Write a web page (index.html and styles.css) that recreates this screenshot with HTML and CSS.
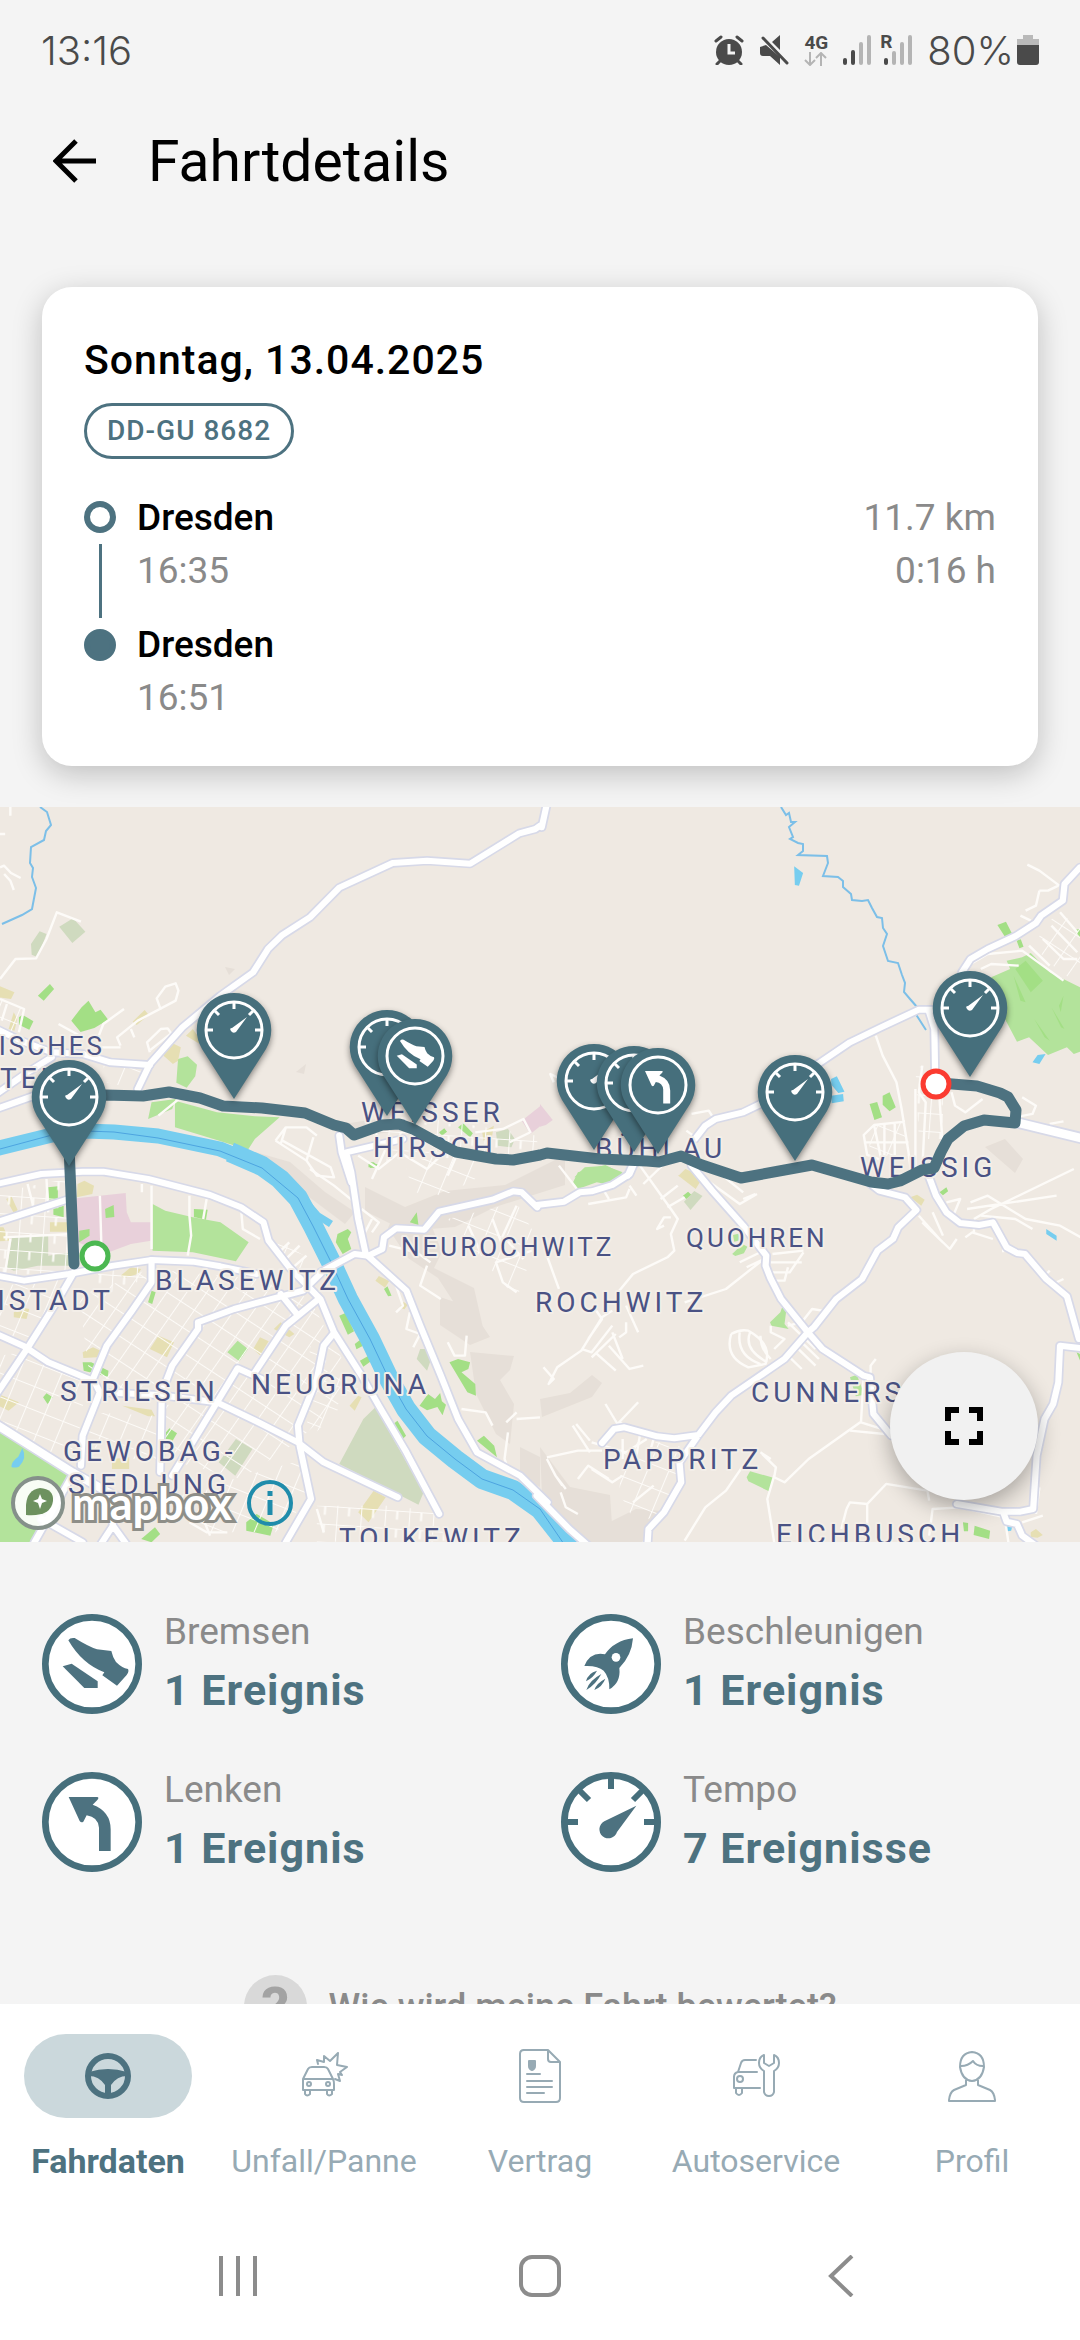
FILE: index.html
```html
<!DOCTYPE html>
<html lang="de">
<head>
    <meta charset="UTF-8">
    <meta name="viewport" content="width=device-width, initial-scale=1.0">
    <title>Fahrtdetails</title>
    <link rel="stylesheet" href="styles.css">
</head>
<body>
    <div class="status-bar">
        <span class="clock">13:16</span>
        <div class="status-icons">
            <svg width="30" height="30" viewBox="0 0 30 30">
                <circle cx="15" cy="17" r="13" fill="#4a4a4a"/>
                <path d="M2 6l5-4M28 6l-5-4M6 26l-3 3M24 26l3 3" stroke="#4a4a4a" stroke-width="3" stroke-linecap="round"/>
                <path d="M15 9v9h6" fill="none" stroke="#f4f4f4" stroke-width="3"/>
            </svg>
            <svg class="muted" width="30" height="30" viewBox="0 0 30 30">
                <path d="M1 12l6-2 14 12v8l-10-9H4q-3 0-3-3zM13 7l8-7v15z" fill="#4a4a4a"/>
                <path d="M4 3l24 25" stroke="#4a4a4a" stroke-width="3" stroke-linecap="round"/>
            </svg>
            <div class="network">
                <b>4G</b>
                <svg width="24" height="14" viewBox="0 0 24 14"><path d="M6 0v12M1 8l5 5 5-5M17 14V2M12 6l5-5 5 5" fill="none" stroke="#b4b4b4" stroke-width="2"/></svg>
            </div>
            <svg width="28" height="30" viewBox="0 0 28 30" stroke-width="4" stroke-linecap="round">
                <path d="M2 25v3M10 17v11" stroke="#4a4a4a"/><path d="M18 9v19M26 2v26" stroke="#b4b4b4"/>
            </svg>
            <div class="roaming">
                <b>R</b>
                <svg width="32" height="30" viewBox="0 0 32 30" stroke-width="4" stroke-linecap="round">
                    <path d="M6 25v3" stroke="#4a4a4a"/><path d="M14 18v10M22 9v19M30 2v26" stroke="#b4b4b4"/>
                </svg>
            </div>
            <span class="battery-level">80%</span>
            <svg width="22" height="30" viewBox="0 0 22 30">
                <path d="M6 0h10v4h6v7H0V4h6z" fill="#b9b9b9"/><path d="M0 10h22v17q0 3-3 3H3q-3 0-3-3z" fill="#4a4a4a"/>
            </svg>
        </div>
    </div>

    <header class="page-header">
        <button type="button" class="back-button" aria-label="Zurück">
            <svg width="44" height="44" viewBox="0 0 44 44"><path d="M43 22H4M23 2L3 22l20 20" fill="none" stroke="#000" stroke-width="5"/></svg>
        </button>
        <h1>Fahrtdetails</h1>
    </header>

    <main>
        <section class="trip-card">
            <h2>Sonntag, 13.04.2025</h2>
            <span class="plate">DD-GU 8682</span>
            <div class="trip">
                <div class="timeline">
                    <span class="dot"></span>
                    <span class="line"></span>
                    <span class="dot filled"></span>
                </div>
                <div class="stops">
                    <div class="stop"><strong>Dresden</strong><span>16:35</span></div>
                    <div class="stop"><strong>Dresden</strong><span>16:51</span></div>
                </div>
                <div class="totals"><span>11.7 km</span><span>0:16 h</span></div>
            </div>
        </section>

        <section class="map">
            <svg class="map-canvas" viewBox="0 0 1080 735" preserveAspectRatio="xMidYMid slice">
                <defs>
                    <pattern id="gridA" width="62" height="48" patternUnits="userSpaceOnUse" patternTransform="rotate(-56)"><path d="M0 0H62M0 0V48"/></pattern>
                    <pattern id="gridB" width="70" height="54" patternUnits="userSpaceOnUse" patternTransform="rotate(4)"><path d="M0 0H70M0 0V54M35 0V27"/></pattern>
                    <pattern id="gridC" width="58" height="66" patternUnits="userSpaceOnUse" patternTransform="rotate(22)"><path d="M0 0H58M0 0V66"/></pattern>

                    <!-- main roads, one group per map tile -->
                    <g id="roads">
                        <g transform="translate(0 -8) scale(.3444 .3333)">
                            <path d="M1568 80L1555 90 1508 103 1365 194 1240 185 1140 192 985 266 900 355 820 408 778 450 735 520 640 590 530 685 435 795 400 870"/>
                            <path d="M-10 690L60 725 150 760 240 765 320 790 435 798M-10 885L80 820 150 775M-10 930L100 890"/>
                            <path d="M985 1010L992 1060 1020 1150"/>
                        </g>
                        <g transform="translate(540 -8) scale(.3444 .3333)">
                            <path d="M18 24L5 85M640 915L590 940 510 960 480 980 450 1020M800 800L900 730 990 685 1100 632 1140 632M1130 640L1145 690 1147 810M1225 520L1250 480 1300 450 1380 412 1440 372 1455 350 1518 305 1523 255 1568 205"/>
                            <path d="M1390 972L1590 1022" stroke-width="1.5em"/>
                            <path d="M270 1095L255 1130"/>
                        </g>
                        <g transform="translate(0 352) scale(.3444 .3333)">
                            <path d="M-10 75L120 45 240 38 300 38 430 60 610 108 700 145 765 190 780 245 840 325 930 420 970 520 1050 650 1100 740 1180 880 1275 1065"/>
                            <path d="M-10 190L195 122M-10 350L70 365 200 345 330 320 440 303 560 308 640 322 745 345"/>
                            <path d="M215 340L170 420 75 575-10 705M440 303V370L380 460 310 560 270 660 290 700 240 830 235 920M-10 525L70 562 140 610 270 665"/>
                            <path d="M1170 -60L1005 -20 1020 40 1040 180 1062 285 1180 395 1220 500 1280 650 1330 780 1385 880 1510 950 1590 1030"/>
                            <path d="M930 340L1030 285 1070 290 1110 270 1115 235 1150 208 1232 212 1275 158 1430 122 1490 97 1515 100 1560 145"/>
                            <path d="M575 490L680 450 880 395 930 345M575 490V510L500 620 470 700 465 940M815 405L862 465M925 420L830 500 740 640M970 522L940 560 920 660 865 800 870 860 903 1020 830 1150M630 730L690 628 760 660M300 700L460 708 630 730 750 790 865 850 940 910 1155 1015M630 730L500 950M320 1040L328 1100 370 1160M328 1100L290 1160"/>
                            <path d="M-20 790L210 940 340 1015" stroke-width="1.4em"/>
                            <path d="M215 940L100 1150M120 1080L240 1150"/>
                        </g>
                        <g transform="translate(540 352) scale(.3444 .3333)">
                            <path d="M-10 138L70 128 115 100 150 97 210 78 260 45 275 10M440 20L500 95 590 200 657 290 655 320 668 355 700 420 778 520 820 570 940 650 958 655 968 765 1020 830"/>
                            <path d="M960 75L985 95 1060 115 1093 153 1040 205 1025 240 980 275 935 360 860 420 795 505 778 520 710 600 555 710 510 760 460 828 405 910 410 970 360 1060 315 1110 312 1160M180 852L215 810 245 805 340 832 390 838 460 828"/>
                            <path d="M1130 55L1150 110 1180 160 1220 192 1275 198 1315 190 1355 265 1385 282 1408 285 1470 360 1530 412 1565 540M1575 568L1510 560 1505 670 1490 735 1465 780 1442 890 1432 1050 1395 1058 1340 1058 1210 1035M1345 1060L1355 1088 1385 1095 1400 1130 1440 1160"/>
                            <path d="M-10 1010L85 1110 140 1160"/>
                        </g>
                    </g>

                    <path id="pinShape" d="M0 -37A37 37 0 0 1 32 19L0 69-32 19A37 37 0 0 1 0 -37Z"/>
                    <g id="brakeGlyph">
                        <path d="M79 79Q84 70 98 72 140 98 165 106L208 111Q212 130 222 144 240 162 258 165 262 172 254 183L225 215 181 184 187 175Q120 150 79 79Z"/>
                        <path d="M62 157L89 149 167 202V222H127Z"/>
                    </g>
                    <path id="turnGlyph" d="M80 75H165Q173 76 166 84L152 98Q206 118 206 172V237H171V167Q168 135 134 130L124 149Q118 154 113 147Z"/>
                    <g id="pinGauge">
                        <use href="#pinShape" class="pin-body"/>
                        <circle r="28" class="pin-ring"/>
                        <path class="pin-ring" d="M0-28v7M-28 0h7M28 0h-7M-19-19l4 4M19-19l-4 4"/>
                        <path class="pin-glyph" d="M13-13L2 2Q-1 4-3 1T-2-2Z"/>
                    </g>
                    <g id="pinBrake">
                        <use href="#pinShape" class="pin-body"/>
                        <circle r="28" class="pin-ring"/>
                        <use href="#brakeGlyph" class="pin-glyph" transform="translate(-30 -30) scale(.19)"/>
                    </g>
                    <g id="pinTurn">
                        <use href="#pinShape" class="pin-body"/>
                        <circle r="28" class="pin-ring"/>
                        <use href="#turnGlyph" class="pin-glyph" transform="translate(-29 -29) scale(.2)"/>
                    </g>
                </defs>

                <rect width="1080" height="735" fill="#efe9e2"/>

                <!-- hills -->
                <g fill="#e6dfd8">
                    <path d="M320 310l30 6 40-6 10 14-50 6zM255 345l35 10 35 30 30 20-10 12-40-30-40-25zM365 380l40 20 40-16 60-6 40-20 20-10v30l-70 22-40 20-50 4-40-20zM395 405l35 10 12 30-8 16 40 20 10 44-20-14-26-40-30-20-20-30zM470 545l44 4-4 14-10 10 14 24-4 40-14-10-20-40zM440 490l30 10 20 30-20 8-30-20zM540 592l30-6 22-18 10 8-10 14-50 20zM540 640l30 40 40 8 2 30-30 10-40-40zM520 640l20 10v30l-20-10zM70 808l10 6-6 10zM225 160l10 2-6 6zM296 265l10-8-2 10zM985 340l20-8 18 20-8 14z"/>
                    <path d="M560 700l40 20 36-18 26 2-20 31h-70z"/>
                </g>

                <!-- parks and built areas -->
                <g transform="translate(0 -8) scale(.3444 .3333)">
                    <path fill="#cfdabf" d="M172 383l40-25 36 40-38 34zM90 435l25-38 20 8-25 70-18-8zM1440 1000l35-10 20 30-10 25-40-5z"/>
                    <path fill="#b3e39b" d="M517 780l28-8 27 25-5 35-25 34-30-15zM508 905L630 940 740 952 812 955 740 1020 720 1052 620 1020 508 985ZM440 910l70-10-10 30-70 30z"/>
                    <path fill="#a3df85" d="M110 590l35-35 12 15-30 35zM207 665l30-40 20-20 20 35 15-8 22 30-40 25-40 12zM55 655l10-8 32 20-12 25-30-15zM1330 985l15-12 28 30-8 12zM1070 1095l30 0-5 12-25-2zM1275 1000l15-12 8 10-15 12z"/>
                    <path fill="#e6dfb3" d="M-5 560l47 20-10 20-37-5zM25 690l15-50 10 20-8 35zM385 668l35-35 12 15-35 30zM475 770l20-40 30 15-8 40-15 10zM540 710l20-20 14 20 6 25zM1400 1000l34-20-5 30-25 15z"/>
                    <path fill="#e8d0da" d="M1515 965l55-45v60l-30 25z"/>
                </g>
                <g transform="translate(540 -8) scale(.3444 .3333)">
                    <path fill="#b3e39b" d="M1310 535L1365 510 1355 485 1400 475 1425 462 1480 520 1568 565 1590 750 1550 765 1530 745 1475 768 1420 715 1385 728 1350 660ZM100 1135l30-30 60-5 50 20-30 20z"/>
                    <path fill="#a3df85" d="M1380 510l30-25 50 60-35 35zM1375 530l35 80-15-5zM1435 660l45 65-15-10zM1485 625l38 65-10-5zM1520 590l-8 50-5-20zM1328 378l25-10 17 35-20 10zM1384 425l12-4 8 22-12 5zM995 890l20-10 18 45-18 12-20-20zM957 915l22-6 14 46-22 8zM1552 392l16-2v25z"/>
                    <path fill="#e8d0da" d="M0 915l37 48-20 15-17 5z"/>
                    <path fill="#e6dfb3" d="M400 1130l60-15-30 25z"/>
                    <path fill="#76cdef" d="M738 202l26 20-12 38-12-2zM845 840l17-8 22 46-18 4-20-25zM845 890l35-5 2 22-35 6zM1430 790l15-22 23-3-18 30z"/>
                </g>
                <g transform="translate(0 352) scale(.3444 .3333)">
                    <path fill="#cfdabf" d="M35 235l105-5v60l70-10v40l-100 0-70 15-20-10zM985 915L1055 780 1090 745 1230 1000 1215 1037ZM635 910l50-70 48 30-50 80zM1210 600l10-30 20 0 15 20-15 45z"/>
                    <path fill="#e8d0da" d="M222 118L365 102 368 160 380 190 438 190V245L380 255 310 282 225 250Z"/>
                    <path fill="#b3e39b" d="M443 135L480 155 560 175 640 190 722 250 685 307 560 280 443 275ZM-5 815L80 865 200 940 100 1150H-5ZM660 580l30-35 30 25-25 37z"/>
                    <path fill="#a3df85" d="M140 85l28-3v38l-25 3zM155 150l30-10v35l-30-8zM305 150l25-12 2 36-25 3zM230 215l30-5v20l-30 20zM563 150l40 2-5 30-35-8zM1190 190l20-30 5 38zM980 225l30-15 10 10-10 20 10 30-25 15-20-35zM985 470l18-8 25 55-18 10zM1030 555l15-12 8 18-18 10zM1045 605l25-15 5 18-20 15zM1305 610l25-10 35 10-5 20-20 10 40 35 2 35-25-10zM1218 740l25-35 20 15 15-18 5 25 12 10-10 32-15-25-30 10zM1142 795l12-10 25 45-10 10zM1385 845l20-15 30 30 8 35zM240 610l25 0 50 25-2 18-70-18zM125 715l10-12 18 12-15 20zM482 820l10-12 22 15-20 35-15-10zM430 430l10-35 12 5-10 35zM715 1090l30-25 50 30-10 35-70-15zM410 1140l40-35 15 20-25 25zM1070 10l15 0 15 12-25 5zM1115 390l10-8 12 28-10 2z"/>
                    <path fill="#e6dfb3" d="M225 75l20-10 28 15-5 25-45 10zM18 120l15-8 18 40-10 12zM145 190h50v28h-50zM-5 205l15 0 18 40-30 2zM435 570l25-40 45 20-20 45zM735 570l20-35 25 12-25 42zM795 510l20-20 40 35-15 10zM355 740l85 12 10 20-20 0zM-5 705l60 25-30 25-30-15zM325 900l50-5v35h-50zM1040 1060l45-65 35 20-50 75zM350 350l30-25 30 5-10 15-40 12zM240 580l30-15 22 10-10 20-40 2zM40 460l20-15 25 5-8 30-37-5zM1160 445l12-16 12 8-10 14zM1015 740l25-30 10 5-20 40zM1090 365l10-14 30 15-12 20z"/>
                    <path fill="#76cdef" d="M65 868q15 30-10 55-15 5-22 0 0-15 20-30z"/>
                </g>
                <g transform="translate(540 352) scale(.3444 .3333)">
                    <path fill="#b3e39b" d="M96 70L110 40 190 18 240 45 190 75 165 70 110 90ZM600 955l10-18 70 20-15 40-60-30zM668 490l30-30 5-15 12 10-5 40 12 15-50-10zM558 285l30-30 14 8-10 20-25 8zM560 228l22-5 2 20-20 5zM900 655l20-8 22 60-25 5z"/>
                    <path fill="#a3df85" d="M415 110l15-12 10 10-15 12zM1160 100l20-15 5 12-15 12zM1262 1100l45 15-3 25-45-12zM1228 1090l15 2v25l-12 0zM1558 580l10 5v20z"/>
                    <path fill="#cfdabf" d="M418 128l30-32 24 15-35 42z"/>
                    <path fill="#e6dfb3" d="M402 50l20-20 35 15 10 20-15 25zM1075 115l20-8 22 15-10 18zM1425 1120l15-10 20 18-15 8-20-2z"/>
                    <path fill="#76cdef" d="M1470 210l30 20v15l-30-20zM1355 1100l18-5-5 20-12 2z"/>
                </g>

                <!-- city street blocks -->
                <g class="blocks" transform="translate(0 352) scale(.3444 .3333)">
                    <path fill="url(#gridA)" d="M230 420L430 330 760 360 900 420 960 540 1040 680 860 850 700 960 480 900 470 740 620 720 450 700 300 690 260 650Z"/>
                    <path fill="url(#gridC)" d="M0 380L200 360 160 440 60 560 0 540ZM0 590L60 580 250 670 230 820 190 920 0 780ZM250 760L460 770 460 900 250 900ZM500 1010L890 900 900 1020 800 1120 600 1120Z"/>
                    <path fill="url(#gridB)" d="M0 100L190 60 200 340 0 350ZM300 310L440 310 420 360 250 430ZM920 1040L1150 1040 1260 1060 1300 1148H920Z"/>
                    <path fill="url(#gridC)" d="M800 240L900 300 930 340 860 400ZM900 560L1040 690 890 850ZM1180 30L1240-20 1420-40 1380 60 1290 110 1200 100ZM1300 180L1500 130 1560 240 1500 420 1400 300Z"/>
                    <path fill="url(#gridB)" d="M1100 10L1080-110 1200-130 1560-70 1560 0 1400-10 1250 0Z"/>
                    <path fill="url(#gridC)" d="M0-480L70-450 40-380 0-390ZM300-280L440-270 390-210 310-230Z"/>
                </g>
                <g class="blocks" transform="translate(540 352) scale(.3444 .3333)">
                    <path fill="url(#gridC)" d="M240 850L380 850 440 880 400 960 350 1060 280 1100 230 1000ZM950-100L1060-110 1070-10 960-10Z"/>
                    <path fill="url(#gridB)" d="M1090-280L1170-270 1170-60 1100-60Z"/>
                    <path fill="url(#gridA)" d="M1430-640L1500-740 1570-700 1570-520 1500-570Z"/>
                </g>

                <!-- side streets -->
                <g class="streets" transform="translate(0 -8) scale(.3444 .3333)">
                    <path d="M0 540L45 480 105 478 135 420 165 340 235 368M0 105L15 105M30 24V50M0 205l12-5 20 22 28 15M12 225l18 20 10 28M170 675l70 40M290 745l60 0M360 630l-60 45-15 40M350 740l-10-25 60-50 110-60 8-30-8-22-30 10-25 35 12 35M435 760l-8-30 40-40 20-2 10 15-60 50M380 690l10 25M0 600l70 30-15 70M20 615l-15 50"/>
                    <path d="M800 1025l30-40 60 0 30 25M800 1025l90 60 30 45 50 5-10-30-140-80M830 985l-15 50M890 1085l20-70M520 900l-60 50M1040 1070l60 40 60-50 80 50 40-40M1080 1140l40-90M1300 1130l30-70M1380 1000l80-10 60-30 20 40-60 30"/>
                </g>
                <g class="streets" transform="translate(540 -8) scale(.3444 .3333)">
                    <path d="M1415 197l35 18 58 45M1450 275h25l30-15M1450 275l-10 45-30 15M1395 350l30 15M975 710l20 60 40 80 15 80 20 130 10 80M1060 968l-90 10-30 30 10 60 40 15M970 978l20 100M1000 975v100M1030 970v110M940 1030h130M1090 870l0 250M1110 800l-10 80 20 30-10 200M1160 900l15 220M1195 880l10 40 30 20 50-40M1400 895l40 25-10 25-50 10M1480 975l40-8M1280 510l30-15 80 5M1420 440l60 60M1460 420l60 60 40 0M1485 380l75 80M1510 340l50 60M40 850l-10-25 20 10M440 945l50-10 15 25M425 995l40 30M1250 495l50-30 100-10 80 60 40 30"/>
                </g>
                <g class="streets" transform="translate(0 352) scale(.3444 .3333)">
                    <path d="M135 60l5 100M80 75l20 80M290 110l5 170M440 80v190M412 75l0 25M550 110l0 60 5 60-10 60M10 235l200-10M30 240l-15 100M600 120l-10 60M700 150l5 60 50 30M840 250l-40 40M870 260l-50 50M890 290l-50 45"/>
                    <path d="M900 30l70 50 60 50M1080 180l-30 60M1050 150l50 40-20 30M1130 260l80 20 40 30M1240 320l-20 60 60 40M1100 320l50 60 20 60-20 20M1190 460l-10 50 40 15-20 40M1300 550l20 40 30 0 5-60M1500 400l-40-30-20-60 60-20 60-20M1360 200l40 90M1430 180l40 110M1500 140l-40 90 60 70M1470 790l30-30M1475 820l-10 80 10 30M1500 780l68-5M1340 750l70 10 20 40M920 1050l20 70M550 1090l50 30h60M590 1080l20 50"/>
                </g>
                <g class="streets" transform="translate(540 352) scale(.3444 .3333)">
                    <path d="M20 290l35 100M55 20l60 80M290 20l90 130 20 30-20 45 10 50-20 20-100 50-40 50-5 30M360 200l-20 10 20-35 20 0M300 75l60-60M350 120l50-40M370 145l50-30M480 60l100 75 50-30M530 50l60 50M590 120l35-15M140 135l110-20 10-25M200 120l-20-35M260 80l20 30M650 300l-110 90-120 40M580 310l60-30M600 325l50-25M670 310h90M665 340l60 0 40-60M720 325l-10 40h-25M765 275l-90 10"/>
                    <path d="M10 625l30 35-15 15 25-50 70-50 60-100 30-20M120 570l30 10 60-80M150 595l70-70M200 560l60 70 40-10M160 580l60 55M210 520l30 80M250 440l35 80M250 490l0 30-20 15M160 450l20 30-40 60M190 735l35 60 60-65M230 790l50 30M20 895l90-20h70M95 800l50 80M105 795l40 50M20 900l25 50 30 40M45 950l20 30M60 1000l15 45 35 20M110 960l30-40 60 40M150 930l60 40 30-20"/>
                    <path d="M555 525q-20 70 50 100l50-10q20-60-50-100-25-5-50 10M580 520q-10 70 60 95M610 520q-20 50 50 90M640 530q0 40 30 70M670 500v20l40 20-30 30M720 490l80 80M710 580l50 50M740 560l60 60M760 550l50 50M720 500l40-10 30-40 30 5"/>
                    <path d="M975 600l-15 20v30M940 650l-8 140 60 20 10 15M900 815l100 10M930 790l-150 110-70 70-30-15 5-30-40-40M680 950l-20 70 20 130M420 1145l60-100 60-50 60-90M890 1050l10-20 50 5 55-60 120 20 5 30M950 1035l0 70M890 1050l-15 60M1130 1130l10-80 80-5 130 30M1100 170l60 70 30 30 20-30M1110 190l60 60M1140 160l30 70M1180 130l40-10-20 50M1250 130l50-20 110 70 100 20 60 35M1240 150l260-40M1260 180l50-30 240-120M1280 170l100 10 50 30M1235 235l20-15 60 20M1260 205v20M1470 345l10-10M1500 370l20-10M1345 260v20M1450 985l-10 80M1350 1080l10 70M1400 1090l60-20M150 850l100 30 60-40M240 840l0 60M290 830l-10 60M330 840l-20 70M270 1030l60-50M640 880l30 20"/>
                </g>

                <!-- creeks -->
                <g class="creek">
                    <path d="M40 0L47 5 51 18 46 24 44 33 31 40 30 56 33 61 32 70 36 81 32 102 22 108 2 117"/>
                    <path d="M781 0L786 8 789 6 791 15 795 15 789 20 793 30 790 32 798 36 803 37 803 44 798 48 827 49 828 56 823 69 838 70 843 74 843 80 851 87 852 93 862 94 868 93 872 101 877 110 882 111 883 121 887 127 883 139 888 154 898 156 902 168 905 176 904 185 910 192 917 200 917 209 926 223"/>
                </g>

                <path class="river" stroke-width="15" d="M-5 342L52 328 85 324 114 325 158 329 220 342 262 359"/>
                <path class="river" stroke-width="20" d="M230 345L262 359 280 372 298 391 313 419 331 455 348 492 370 532 389 572 406 602 427 629 455 652 482 672 513 683 540 702 570 740"/>
                <path d="M308 392l12 14 13 8-4 6-14-9-8-14z" fill="#76cdef"/>
                <path class="river-line" d="M0 342L52 328 85 324 114 325 158 331 220 344 262 361 298 391 313 419 331 455 348 492 370 532 389 572 406 602 427 629 455 652 482 672 513 683 540 702 566 740"/>

                <use href="#roads" class="road-casing"/>
                <use href="#roads" class="road"/>

                <g class="place">
                    <text x="105" y="248" text-anchor="end" class="small">ISCHES</text>
                    <text x="0" y="281">TEI</text>
                    <text x="361" y="315">WEISSER</text>
                    <text x="373" y="350">HIRSCH</text>
                    <text x="595" y="351">BÜHLAU</text>
                    <text x="860" y="370">WEISSIG</text>
                    <text x="401" y="449" class="small">NEUROCHWITZ</text>
                    <text x="686" y="440" class="small">QUOHREN</text>
                    <text x="155" y="483">BLASEWITZ</text>
                    <text x="114" y="503" text-anchor="end">ISTADT</text>
                    <text x="535" y="505">ROCHWITZ</text>
                    <text x="60" y="594">STRIESEN</text>
                    <text x="251" y="587">NEUGRUNA</text>
                    <text x="751" y="595">CUNNERSD</text>
                    <text x="63" y="654">GEWOBAG-</text>
                    <text x="68" y="687">SIEDLUNG</text>
                    <text x="603" y="662">PAPPRITZ</text>
                    <text x="339" y="741">TOLKEWITZ</text>
                    <text x="776" y="737">EICHBUSCH</text>
                </g>

                <path class="route" d="M74 457L69 340M85 290L105 288 143 289 169 285 200 291 223 299 262 301 305 306 334 318 346 321 354 328 382 318 399 317 413 322 444 339 456 345 496 352 513 353 540 348 547 346 600 352 647 354 659 355 681 349 702 358 741 371 812 358 871 375 888 377 900 374 922 363 934 361 941 345 948 332 964 319 984 313 1015 316 1016 303 1008 290 1000 286 977 279 940 276"/>
                <circle cx="95" cy="449" r="13" fill="#fff" stroke="#4cb851" stroke-width="5"/>
                <circle cx="936" cy="277" r="13" fill="#fff" stroke="#fb3b30" stroke-width="5"/>

                <g class="pins">
                    <use href="#pinGauge" x="69" y="290"/>
                    <use href="#pinGauge" x="234" y="223"/>
                    <use href="#pinGauge" x="387" y="240"/>
                    <use href="#pinBrake" x="415" y="249"/>
                    <use href="#pinGauge" x="594" y="274"/>
                    <use href="#pinGauge" x="634" y="276"/>
                    <use href="#pinTurn" x="658" y="278"/>
                    <use href="#pinGauge" x="795" y="285"/>
                    <use href="#pinGauge" x="970" y="201"/>
                </g>
            </svg>

            <div class="map-credit">
                <svg width="56" height="56" viewBox="0 0 56 56">
                    <circle cx="28" cy="28" r="25" fill="#fff" fill-opacity=".9" stroke="#85908a" stroke-width="4"/>
                    <path d="M16 40V30Q17 15 30 13 44 14 43 26 41 42 16 40Z" fill="#6d915f"/>
                    <path d="M30 19l2 5 5 2-5 2-2 6-2-6-5-2 5-2z" fill="#fff"/>
                </svg>
                <span class="mapbox">mapbox</span>
                <button type="button" class="info-button" aria-label="Karteninformationen">
                    <svg width="48" height="48" viewBox="0 0 48 48"><circle cx="24" cy="24" r="21" fill="none" stroke="#1f8cab" stroke-width="4"/><path d="M24 21v15M24 12v5" stroke="#1f8cab" stroke-width="5"/></svg>
                </button>
            </div>
            <button type="button" class="fullscreen-button" aria-label="Vollbild">
                <svg width="38" height="38" viewBox="0 0 38 38"><path d="M3 14V3h11M24 3h11v11M35 24v11H24M14 35H3V24" fill="none" stroke="#000" stroke-width="6"/></svg>
            </button>
        </section>

        <section class="events">
            <div class="event">
                <svg viewBox="0 0 300 300"><circle cx="150" cy="150" r="140"/><use href="#brakeGlyph"/></svg>
                <div><span>Bremsen</span><strong>1 Ereignis</strong></div>
            </div>
            <div class="event">
                <svg viewBox="0 0 300 300">
                    <circle cx="150" cy="150" r="140"/>
                    <path d="M216 73Q212 125 175 162 180 206 145 226 146 190 128 170 110 154 70 156 88 112 132 121 160 80 216 73Z"/>
                    <circle class="hole" cx="165" cy="130" r="13"/>
                    <path d="M108 170Q82 176 75 202 98 190 108 170ZM121 180Q84 200 76 228 104 212 121 180ZM133 194Q106 208 100 228 124 218 133 194Z"/>
                </svg>
                <div><span>Beschleunigen</span><strong>1 Ereignis</strong></div>
            </div>
            <div class="event">
                <svg viewBox="0 0 300 300"><circle cx="150" cy="150" r="140"/><use href="#turnGlyph"/></svg>
                <div><span>Lenken</span><strong>1 Ereignis</strong></div>
            </div>
            <div class="event">
                <svg viewBox="0 0 300 300">
                    <circle cx="150" cy="150" r="140"/>
                    <path class="ticks" d="M150 15V51M15 150H51M285 150H249M54 54L84 84M246 54L216 84"/>
                    <path d="M226 101L168 180A27 27 0 1 1 130 148Z"/>
                </svg>
                <div><span>Tempo</span><strong>7 Ereignisse</strong></div>
            </div>
        </section>

        <a href="#bewertung" class="help-link">
            <span class="help-mark">?</span>
            Wie wird meine Fahrt bewertet?
        </a>
    </main>

    <nav class="tab-bar">
        <a href="#fahrdaten" class="tab active">
            <span class="tab-icon">
                <svg width="48" height="48" viewBox="0 0 48 48">
                    <circle cx="24" cy="24" r="20" class="wheel"/>
                    <path d="M5 20Q24 14 43 20V24Q33 24 27 33V43H21V33Q15 24 5 24Z" fill="#4d7280"/>
                </svg>
            </span>
            Fahrdaten
        </a>
        <a href="#unfall" class="tab">
            <span class="tab-icon">
                <svg width="48" height="48" viewBox="0 0 48 48">
                    <path d="M3 27L8 17Q9 15 12 15H24Q27 15 28 17L33 27M3 27H33Q34 29 34 32V38H3V29ZM5 38V42Q7 45 10 42V38M27 38V42Q29 45 32 42V38"/>
                    <circle cx="9" cy="32" r="2"/><circle cx="28" cy="32" r="2"/>
                    <path d="M18 12L17 8 24 10V4L30 9 38 1 37 13 47 15 40 20 42 23 38 22 40 29 35 27"/>
                </svg>
            </span>
            Unfall/Panne
        </a>
        <a href="#vertrag" class="tab">
            <span class="tab-icon">
                <svg width="44" height="56" viewBox="0 0 44 56">
                    <path d="M5 2H30L42 14V50Q42 54 38 54H6Q2 54 2 50V6Q2 2 6 2M30 2V11Q30 14 33 14H42M9 26H22M9 33H34M9 39H34M9 45H26"/>
                    <path d="M11 13h6v5q0 3-3 4-3-1-3-4z" fill="#97aab4"/>
                </svg>
            </span>
            Vertrag
        </a>
        <a href="#autoservice" class="tab">
            <span class="tab-icon">
                <svg width="48" height="48" viewBox="0 0 48 48">
                    <path d="M24 8H13Q10 8 9 11L6 20H25M6 20Q2 21 2 25V36H28M4 36V41Q7 45 10 41V36"/>
                    <circle cx="8" cy="27" r="3"/>
                    <path d="M32 3Q27 5 27 11 27 16 32 19V40Q33 44 37 44T42 40V19Q47 16 47 11 47 5 42 3V11L37 14 32 11Z"/>
                </svg>
            </span>
            Autoservice
        </a>
        <a href="#profil" class="tab">
            <span class="tab-icon">
                <svg width="48" height="52" viewBox="0 0 48 52">
                    <path d="M24 2Q36 3 36 17 34 30 24 31 14 30 12 17 12 3 24 2ZM13 16Q20 16 25 11 28 16 35 16M18 30V35L6 40Q2 42 1 50V51H47V50Q46 42 42 40L30 35V30"/>
                </svg>
            </span>
            Profil
        </a>
    </nav>

    <div class="system-nav">
        <button type="button" aria-label="Letzte Apps"><svg width="42" height="42" viewBox="0 0 42 42"><path d="M4 1V41M21 1V41M38 1V41"/></svg></button>
        <button type="button" aria-label="Startbildschirm"><svg width="42" height="42" viewBox="0 0 42 42"><rect x="2" y="2" width="38" height="38" rx="11"/></svg></button>
        <button type="button" aria-label="Zurück"><svg width="42" height="42" viewBox="0 0 42 42"><path d="M31 1L10 21 31 41"/></svg></button>
    </div>
</body>
</html>
```
FILE: styles.css
```css
* { box-sizing: border-box; }
body {
    margin: 0;
    height: 100vh;
    display: flex;
    flex-direction: column;
    background-color: #f4f4f4;
    color: #000;
    font-family: Roboto, "Liberation Sans", sans-serif;
    font-size: 37px;
}
h1, h2 { margin: 0; }
button { padding: 0; border: none; background: none; cursor: pointer; }
a { text-decoration: none; }
svg { display: block; flex: none; }

/* status bar */
.status-bar {
    display: flex;
    justify-content: space-between;
    align-items: center;
    height: 100px;
    padding: 0 41px;
    flex: none;
    font-family: Inter, Roboto, sans-serif;
    font-size: 40px;
    font-weight: 300;
    color: #4a4a4a;
}
.status-icons { display: flex; align-items: center; gap: 15px; }
.battery-level { margin-right: -12px; }
.network { display: flex; flex-direction: column; align-items: center; }
.network b, .roaming b { font: 700 19px/18px Roboto, sans-serif; }
.roaming { position: relative; margin-left: -6px; }
.roaming b { position: absolute; left: 0; top: -2px; }

/* header */
.page-header {
    display: flex;
    align-items: center;
    gap: 51px;
    height: 122px;
    padding: 0 53px;
    flex: none;
}
.page-header h1 { font-size: 57px; font-weight: 400; }

main { flex: 1; min-height: 0; overflow: hidden; padding-top: 65px; }

/* trip card */
.trip-card {
    margin: 0 42px 41px;
    padding: 42px;
    border-radius: 30px;
    background-color: #fff;
    box-shadow: 0 8px 30px rgba(0,0,0,0.22);
}
.trip-card h2 {
    font-size: 41px;
    line-height: 62px;
    font-weight: 500;
    letter-spacing: 1px;
}
.plate {
    display: inline-block;
    margin-top: 12px;
    padding: 0 20px;
    border: 3px solid #4d7280;
    border-radius: 28px;
    color: #4d7280;
    font-size: 28px;
    line-height: 50px;
    font-weight: 500;
    letter-spacing: 1px;
    vertical-align: top;
}
.trip { display: flex; gap: 21px; margin-top: 32px; line-height: 53px; }
.timeline { display: flex; flex-direction: column; align-items: center; padding: 10px 0 63px; }
.stops { display: flex; flex-direction: column; gap: 21px; flex: 1; }
.stop, .totals { display: flex; flex-direction: column; }
.stop strong { font-weight: 500; }
.stop span, .totals { color: #8a8a8a; }
.totals { text-align: right; }
.dot { width: 32px; height: 32px; border: 6px solid #4d7280; border-radius: 50%; }
.dot.filled { background-color: #4d7280; }
.line { flex: 1; width: 3px; margin: 11px 0; background-color: #4d7280; }

/* map */
.map { position: relative; aspect-ratio: 1080 / 735; overflow: hidden; }
.map-canvas { width: 100%; height: 100%; }
pattern path { stroke: #fdfbf8; stroke-width: 6; fill: none; }
.streets { fill: none; stroke: #fdfbf8; stroke-width: 7; stroke-linejoin: round; }
.road, .road-casing { fill: none; stroke-linejoin: round; stroke-linecap: round; }
.road { stroke: #fff; stroke-width: 18; font-size: 17px; }
.road-casing { stroke: #d7d9e8; stroke-width: 28; font-size: 24px; }
.creek { fill: none; stroke: #7cbfe8; stroke-width: 2; }
.river { fill: none; stroke: #76cdef; stroke-linejoin: round; }
.river-line { fill: none; stroke: #4da4e0; stroke-width: 1; }
.place {
    font-size: 28px;
    letter-spacing: 4px;
    fill: #4a5284;
    stroke: #f3eee8;
    stroke-width: 4px;
    stroke-linejoin: round;
    paint-order: stroke;
}
.place .small { font-size: 26px; letter-spacing: 3px; }
.route { fill: none; stroke: #4d7280; stroke-width: 11; stroke-linejoin: round; stroke-linecap: round; }
.pins use { filter: drop-shadow(0 3px 3px rgba(0,0,0,0.45)); }
.pin-body { fill: #466f7c; }
.pin-ring { fill: none; stroke: #fff; stroke-width: 3; }
.pin-glyph { fill: #fff; }
.map-credit {
    position: absolute;
    left: 10px;
    bottom: 11px;
    display: flex;
    align-items: center;
    gap: 6px;
}
.mapbox {
    width: 168px;
    color: #fff;
    font-family: Lato, sans-serif;
    font-size: 45px;
    line-height: 56px;
    font-weight: 700;
    -webkit-text-stroke: 6px #8e8e88;
    paint-order: stroke fill;
}
.fullscreen-button {
    position: absolute;
    right: 42px;
    bottom: 42px;
    width: 148px;
    height: 148px;
    display: flex;
    justify-content: center;
    align-items: center;
    border-radius: 50%;
    background-color: #f1f1f1;
    box-shadow: 0 8px 22px rgba(0,0,0,0.3);
}

/* events */
.events {
    display: grid;
    grid-template-columns: 1fr 1fr;
    gap: 50px 42px;
    padding: 68px 42px 0;
}
.event { display: flex; align-items: center; gap: 22px; height: 108px; }
.event svg { width: 100px; height: 100px; fill: #4d7280; }
.event circle { fill: #fff; stroke: #466f7c; stroke-width: 20; }
.event .hole { stroke: none; }
.event .ticks { stroke: #466f7c; stroke-width: 18; }
.event div { display: flex; flex-direction: column; line-height: 58px; padding-bottom: 6px; }
.event span { color: #8a8a8a; }
.event strong { color: #4d7280; font-size: 43px; letter-spacing: 1px; }

.help-link {
    display: flex;
    justify-content: center;
    align-items: center;
    gap: 22px;
    margin-top: 99px;
    color: #8a8a8a;
    font-size: 36px;
    font-weight: 500;
    white-space: nowrap;
}
.help-mark {
    width: 63px;
    height: 63px;
    border-radius: 50%;
    background-color: #d9d9d9;
    color: #a3a3a3;
    font-size: 56px;
    line-height: 67px;
    font-weight: 700;
    text-align: center;
}

/* bottom navigation */
.tab-bar {
    display: grid;
    grid-template-columns: repeat(5, 1fr);
    padding-top: 30px;
    flex: none;
    background-color: #fff;
}
.tab {
    display: flex;
    flex-direction: column;
    align-items: center;
    gap: 23px;
    color: #97aab4;
    font-size: 32px;
    line-height: 40px;
}
.tab-icon {
    display: flex;
    justify-content: center;
    align-items: center;
    width: 168px;
    height: 84px;
    border-radius: 42px;
}
.tab svg { fill: none; stroke: #97aab4; stroke-width: 2; stroke-linejoin: round; stroke-linecap: round; }
.tab.active { color: #4d7280; font-size: 34px; font-weight: 700; }
.tab.active .tab-icon { background-color: #cbd8dc; }
.tab.active svg { stroke: none; }
.tab.active .wheel { stroke: #4d7280; stroke-width: 6; }
.system-nav {
    display: flex;
    justify-content: center;
    align-items: center;
    gap: 260px;
    height: 159px;
    padding-top: 31px;
    flex: none;
    background-color: #fff;
}
.system-nav svg { fill: none; stroke: #8c8c8c; stroke-width: 4; }
```
